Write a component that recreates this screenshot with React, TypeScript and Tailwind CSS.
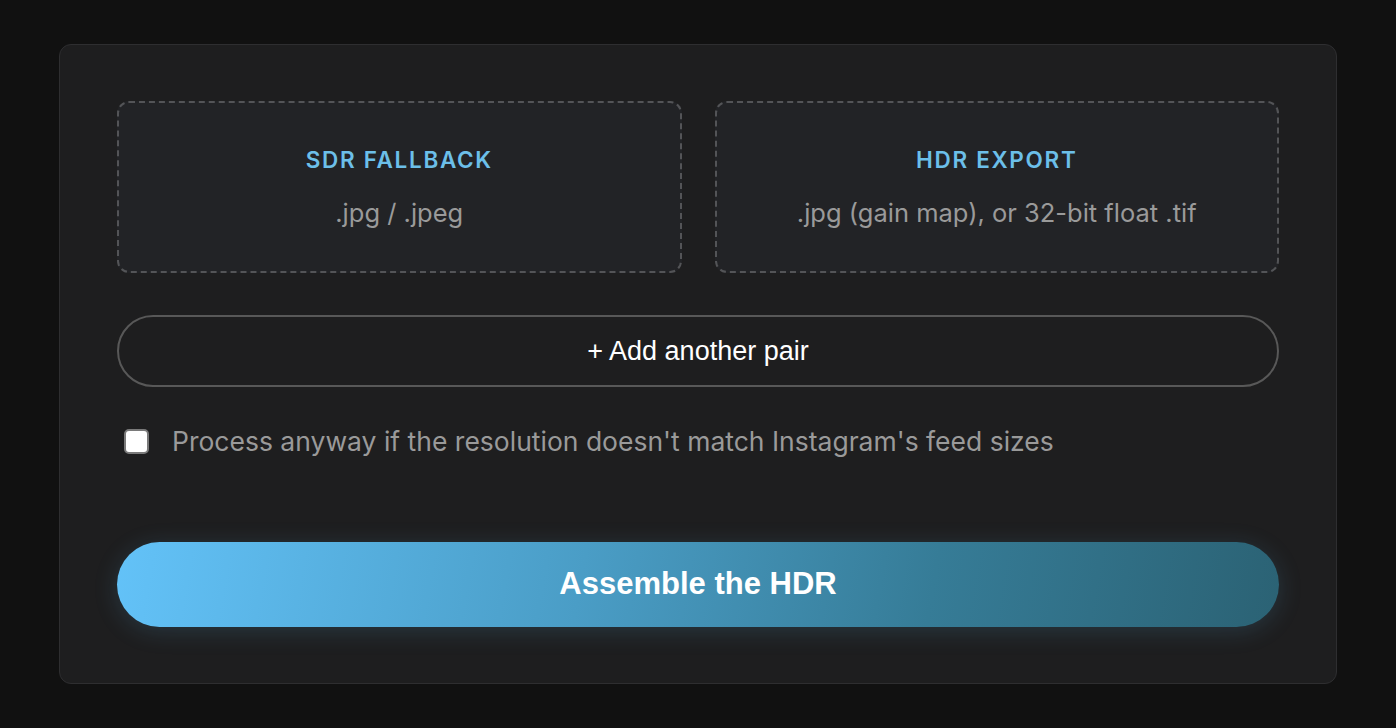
import React from "react";

function DropZone({ title, desc }: { title: string; desc: string }) {
  return (
    <div className="flex h-[172px] flex-col items-center justify-center rounded-[12px] border-2 border-dashed border-[#535457] bg-[#222326]">
      <div className="text-[22.5px] font-semibold uppercase leading-[26px] tracking-[0.075em] text-[#6cbfe9]">
        {title}
      </div>
      <div className="mt-[25px] text-[25.5px] leading-[30px] text-[#9a9a9a]">{desc}</div>
    </div>
  );
}

export default function App() {
  return (
    <div
      className="min-h-[728px] w-full bg-[#111111] px-[59px] pt-[44px]"
      style={{ fontFamily: "Inter, 'Noto Sans', sans-serif" }}
    >
      <div className="flex h-[640px] flex-col rounded-[12px] border border-[#2e2e30] bg-[#1e1e1f] px-[57px] pt-[56px]">
        <div className="grid grid-cols-2 gap-[33px]">
          <DropZone title="SDR Fallback" desc=".jpg / .jpeg" />
          <DropZone title="HDR Export" desc=".jpg (gain map), or 32-bit float .tif" />
        </div>
        <button
          className="mt-[42px] flex h-[72px] w-full items-center justify-center rounded-full border-2 border-[#585858] bg-transparent text-[27px] text-white"
          style={{ fontFamily: "'Liberation Sans', Arial, sans-serif" }}
        >
          + Add another pair
        </button>
        <label className="mt-[38px] flex h-[32px] items-center gap-[23px] pl-[7px]">
          <span className="block h-[25px] w-[25px] shrink-0 rounded-[5px] border-2 border-[#7a7a7a] bg-white" />
          <span className="text-[26.5px] leading-[32px] text-[#9a9a9a]">
            Process anyway if the resolution doesn't match Instagram's feed sizes
          </span>
        </label>
        <button
          className="mt-[85px] flex h-[85px] w-full items-center justify-center rounded-full bg-[linear-gradient(100deg,#63c2f8_0%,#4a9dc6_40%,#367c97_70%,#2b6274_100%)] text-[31px] font-bold text-white shadow-[0_4px_24px_rgba(90,170,220,0.18)]"
          style={{ fontFamily: "'Liberation Sans', Arial, sans-serif" }}
        >
          Assemble the HDR
        </button>
      </div>
    </div>
  );
}
